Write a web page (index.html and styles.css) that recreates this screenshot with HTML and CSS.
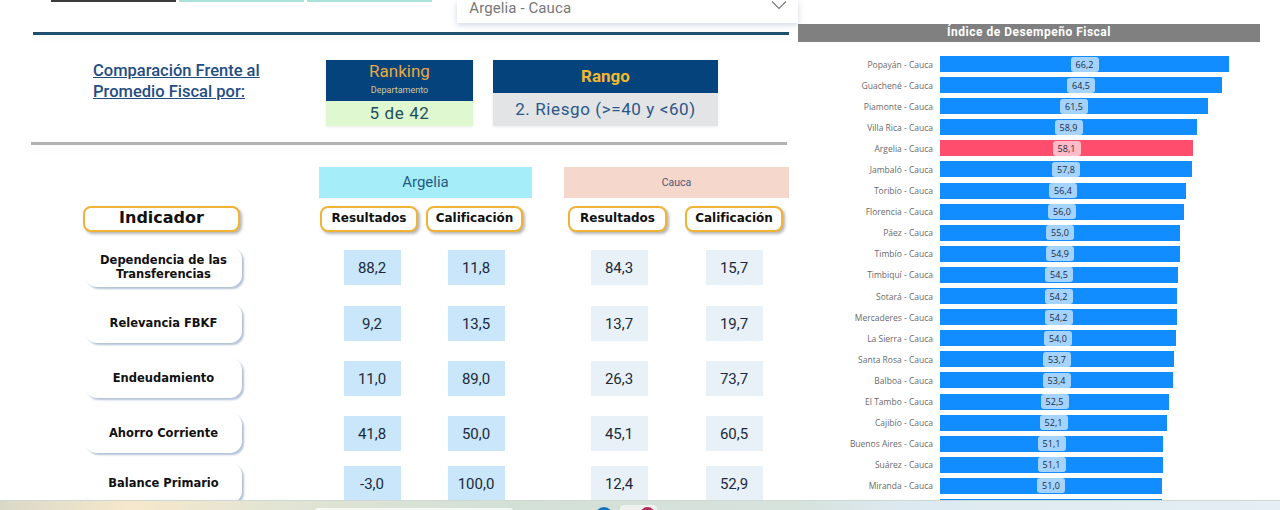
FILE: index.html
```html
<!DOCTYPE html>
<html lang="es">
<head>
    <meta charset="UTF-8">
    <meta name="viewport" content="width=device-width, initial-scale=1.0">
    <title>Índice de Desempeño Fiscal</title>
    <link rel="stylesheet" href="styles.css">
</head>
<body>

<div class="app">
    <!-- Left: comparison table -->
    <div class="left">
        <div class="top-bar">
            <div class="tabs">
                <div class="tab tab-dark"></div>
                <div class="tab"></div>
                <div class="tab"></div>
            </div>
            <div class="dropdown">
                <span>Argelia - Cauca</span>
                <svg class="chevron" width="16" height="10" viewBox="0 0 16 10"><path d="M1 1.5 L8 8.5 L15 1.5" fill="none" stroke="#777" stroke-width="1.1"/></svg>
            </div>
        </div>
        <div class="rule rule-blue"></div>

        <div class="summary">
            <h2 class="summary-title">Comparación Frente al Promedio Fiscal por:</h2>
            <div class="kpi kpi-ranking">
                <div class="kpi-head ranking-head">
                    <div class="ranking-name">Ranking</div>
                    <div class="ranking-sub">Departamento</div>
                </div>
                <div class="kpi-value ranking-value">5 de 42</div>
            </div>
            <div class="kpi kpi-rango">
                <div class="kpi-head rango-head">Rango</div>
                <div class="kpi-value rango-value">2. Riesgo (&gt;=40 y &lt;60)</div>
            </div>
        </div>
        <div class="rule rule-grey"></div>

        <div class="bands">
            <div class="band band-a">Argelia</div>
            <div class="band band-b">Cauca</div>
        </div>
        <div class="pills">
            <div class="pill pill-main">Indicador</div>
            <div class="pill pill-a1">Resultados</div>
            <div class="pill pill-a2">Calificación</div>
            <div class="pill pill-b1">Resultados</div>
            <div class="pill pill-b2">Calificación</div>
        </div>

        <div class="rows">
            <div class="row">
                <div class="row-label">Dependencia de las Transferencias</div>
                <div class="vals vals-a"><div class="cell"><span class="val val-a">88,2</span></div><div class="cell"><span class="val val-a">11,8</span></div></div>
                <div class="vals vals-b"><div class="cell"><span class="val val-b">84,3</span></div><div class="cell"><span class="val val-b">15,7</span></div></div>
            </div>
            <div class="row">
                <div class="row-label">Relevancia FBKF</div>
                <div class="vals vals-a"><div class="cell"><span class="val val-a">9,2</span></div><div class="cell"><span class="val val-a">13,5</span></div></div>
                <div class="vals vals-b"><div class="cell"><span class="val val-b">13,7</span></div><div class="cell"><span class="val val-b">19,7</span></div></div>
            </div>
            <div class="row">
                <div class="row-label">Endeudamiento</div>
                <div class="vals vals-a"><div class="cell"><span class="val val-a">11,0</span></div><div class="cell"><span class="val val-a">89,0</span></div></div>
                <div class="vals vals-b"><div class="cell"><span class="val val-b">26,3</span></div><div class="cell"><span class="val val-b">73,7</span></div></div>
            </div>
            <div class="row">
                <div class="row-label">Ahorro Corriente</div>
                <div class="vals vals-a"><div class="cell"><span class="val val-a">41,8</span></div><div class="cell"><span class="val val-a">50,0</span></div></div>
                <div class="vals vals-b"><div class="cell"><span class="val val-b">45,1</span></div><div class="cell"><span class="val val-b">60,5</span></div></div>
            </div>
            <div class="row">
                <div class="row-label">Balance Primario</div>
                <div class="vals vals-a"><div class="cell"><span class="val val-a">-3,0</span></div><div class="cell"><span class="val val-a">100,0</span></div></div>
                <div class="vals vals-b"><div class="cell"><span class="val val-b">12,4</span></div><div class="cell"><span class="val val-b">52,9</span></div></div>
            </div>
        </div>
    </div>

    <!-- Right: bar chart -->
    <div class="right">
        <div class="chart-title">Índice de Desempeño Fiscal</div>
        <div class="chart">
            <div class="bar-row"><div class="bar-name">Popayán - Cauca</div><div class="bar" style="width:289px"><span class="bar-val">66,2</span></div></div>
            <div class="bar-row"><div class="bar-name">Guachené - Cauca</div><div class="bar" style="width:282px"><span class="bar-val">64,5</span></div></div>
            <div class="bar-row"><div class="bar-name">Piamonte - Cauca</div><div class="bar" style="width:268px"><span class="bar-val">61,5</span></div></div>
            <div class="bar-row"><div class="bar-name">Villa Rica - Cauca</div><div class="bar" style="width:257px"><span class="bar-val">58,9</span></div></div>
            <div class="bar-row"><div class="bar-name">Argelia - Cauca</div><div class="bar bar-red" style="width:253px"><span class="bar-val">58,1</span></div></div>
            <div class="bar-row"><div class="bar-name">Jambaló - Cauca</div><div class="bar" style="width:252px"><span class="bar-val">57,8</span></div></div>
            <div class="bar-row"><div class="bar-name">Toribío - Cauca</div><div class="bar" style="width:246px"><span class="bar-val">56,4</span></div></div>
            <div class="bar-row"><div class="bar-name">Florencia - Cauca</div><div class="bar" style="width:244px"><span class="bar-val">56,0</span></div></div>
            <div class="bar-row"><div class="bar-name">Páez - Cauca</div><div class="bar" style="width:240px"><span class="bar-val">55,0</span></div></div>
            <div class="bar-row"><div class="bar-name">Timbío - Cauca</div><div class="bar" style="width:240px"><span class="bar-val">54,9</span></div></div>
            <div class="bar-row"><div class="bar-name">Timbiquí - Cauca</div><div class="bar" style="width:238px"><span class="bar-val">54,5</span></div></div>
            <div class="bar-row"><div class="bar-name">Sotará - Cauca</div><div class="bar" style="width:237px"><span class="bar-val">54,2</span></div></div>
            <div class="bar-row"><div class="bar-name">Mercaderes - Cauca</div><div class="bar" style="width:237px"><span class="bar-val">54,2</span></div></div>
            <div class="bar-row"><div class="bar-name">La Sierra - Cauca</div><div class="bar" style="width:236px"><span class="bar-val">54,0</span></div></div>
            <div class="bar-row"><div class="bar-name">Santa Rosa - Cauca</div><div class="bar" style="width:234px"><span class="bar-val">53,7</span></div></div>
            <div class="bar-row"><div class="bar-name">Balboa - Cauca</div><div class="bar" style="width:233px"><span class="bar-val">53,4</span></div></div>
            <div class="bar-row"><div class="bar-name">El Tambo - Cauca</div><div class="bar" style="width:229px"><span class="bar-val">52,5</span></div></div>
            <div class="bar-row"><div class="bar-name">Cajibío - Cauca</div><div class="bar" style="width:227px"><span class="bar-val">52,1</span></div></div>
            <div class="bar-row"><div class="bar-name">Buenos Aires - Cauca</div><div class="bar" style="width:223px"><span class="bar-val">51,1</span></div></div>
            <div class="bar-row"><div class="bar-name">Suárez - Cauca</div><div class="bar" style="width:223px"><span class="bar-val">51,1</span></div></div>
            <div class="bar-row"><div class="bar-name">Miranda - Cauca</div><div class="bar" style="width:222px"><span class="bar-val">51,0</span></div></div>
            <div class="bar-row"><div class="bar-name"></div><div class="bar" style="width:222px"></div></div>
        </div>
    </div>
</div>

<div class="taskbar">
    <div class="search"></div>
    <div class="task-icon task-blue"></div>
    <div class="task-card"><div class="task-icon task-red"></div></div>
</div>

</body>
</html>
```

FILE: styles.css
```css
html, body {
    margin: 0;
    padding: 0;
}
body {
    width: 1280px;
    height: 510px;
    overflow: hidden;
    background-color: #fff;
    font-family: Roboto, "Liberation Sans", sans-serif;
}
.app {
    display: flex;
    height: 500px;
    overflow: hidden;
}

/* left side */
.left {
    width: 798px;
    flex: none;
}
.top-bar {
    display: flex;
    height: 24px;
    padding-left: 51px;
}
.tabs {
    display: flex;
    gap: 3px;
    width: 408px;
}
.tab {
    width: 125px;
    height: 2px;
    background-color: #a9e2da;
}
.tab-dark {
    background-color: #3b3b3b;
}
.dropdown {
    display: flex;
    justify-content: space-between;
    width: 318px;
    height: 23px;
    padding: 0 12px;
    background: #fff;
    color: #777;
    font-size: 15px;
    line-height: 16px;
    letter-spacing: 0.1px;
    box-shadow: 0 2px 6px rgba(120,140,180,0.35);
}
.chevron {
    margin-right: -1px;
}
.rule {
    height: 3px;
}
.rule-blue {
    width: 756px;
    margin: 8px 0 0 33px;
    background-color: #1f5070;
    box-shadow: 0 4px 8px rgba(0,0,0,0.04);
}
.rule-grey {
    width: 756px;
    margin: 16px 0 0 31px;
    background-color: #b2b2b2;
    box-shadow: 0 4px 8px rgba(0,0,0,0.05);
}

.summary {
    display: flex;
    height: 66px;
    margin-top: 25px;
    padding-left: 93px;
}
.summary-title {
    width: 200px;
    margin: 0 33px 0 0;
    color: #1f4e84;
    font-size: 16.5px;
    font-weight: 500;
    line-height: 21px;
    text-decoration: underline;
}
.kpi {
    display: flex;
    flex-direction: column;
    box-shadow: 0 1px 3px rgba(0,0,0,0.08);
}
.kpi-ranking {
    width: 147px;
    margin-right: 20px;
}
.kpi-rango {
    width: 225px;
}
.kpi-head {
    background-color: #04437c;
    text-align: center;
}
.ranking-head {
    height: 41px;
}
.ranking-name {
    padding-top: 1px;
    color: #e9a844;
    font-size: 17px;
    line-height: 20px;
}
.ranking-sub {
    margin-top: 3px;
    color: #d8c89a;
    font-size: 9px;
    line-height: 12px;
}
.rango-head {
    height: 33px;
    color: #f2b92e;
    font-size: 17px;
    font-weight: 700;
    line-height: 32px;
}
.kpi-value {
    flex: 1;
    text-align: center;
    font-size: 17px;
    letter-spacing: 0.6px;
}
.ranking-value {
    background-color: #e0f8cf;
    color: #1f4f5c;
    line-height: 25px;
}
.rango-value {
    background-color: #e3e4e6;
    color: #2a5688;
    line-height: 33px;
}

/* table */
.bands {
    display: flex;
    gap: 32px;
    margin-top: 22px;
    padding-left: 319px;
}
.band {
    height: 31px;
    text-align: center;
    line-height: 31px;
}
.band-a {
    width: 213px;
    background-color: #a6edfa;
    color: #1f5c80;
    font-size: 15px;
}
.band-b {
    width: 225px;
    background-color: #f6d7cb;
    color: #4a5878;
    font-size: 10.5px;
}
.pills {
    display: flex;
    margin-top: 8px;
    padding-left: 83px;
}
.pill {
    box-sizing: border-box;
    height: 26px;
    border: 2.5px solid #efb336;
    border-radius: 8px;
    background: #fff;
    box-shadow: 2px 2px 3px rgba(90,90,90,0.45);
    color: #111;
    font-family: "DejaVu Sans", sans-serif;
    font-size: 12px;
    font-weight: 700;
    line-height: 20px;
    text-align: center;
}
.pill-main {
    width: 157px;
    font-size: 16px;
}
.pill-a1 {
    width: 98px;
    margin: 0 8px 0 80px;
}
.pill-a2 {
    width: 97px;
    margin-right: 45px;
}
.pill-b1 {
    width: 99px;
    margin-right: 18px;
}
.pill-b2 {
    width: 98px;
}

.rows {
    margin-top: 15px;
    padding-left: 85px;
}
.row {
    display: flex;
    align-items: center;
    height: 40px;
    margin-bottom: 15px;
}
.row:first-child {
    margin-bottom: 16px;
}
.row:nth-child(4) {
    margin-bottom: 10px;
}
.row-label {
    box-sizing: border-box;
    display: flex;
    align-items: center;
    justify-content: center;
    width: 157px;
    height: 40px;
    padding: 0 10px;
    border-radius: 12px;
    background: #fff;
    box-shadow: 2px 2px 2px #b4c2d8;
    color: #111;
    font-family: "DejaVu Sans", sans-serif;
    font-size: 11.5px;
    font-weight: 700;
    line-height: 14px;
    text-align: center;
}
.vals {
    display: flex;
}
.vals-a {
    margin-left: 78px;
}
.vals-a .cell {
    width: 104px;
}
.vals-b {
    margin-left: 41px;
    gap: 15px;
}
.vals-b .cell {
    width: 100px;
}
.cell {
    display: flex;
    justify-content: center;
}
.val {
    width: 57px;
    height: 35px;
    color: #1b2a3a;
    font-size: 15px;
    line-height: 36px;
    text-align: center;
}
.val-a {
    background-color: #c9e6fb;
}
.val-b {
    background-color: #e9f1f8;
}

/* right side */
.right {
    flex: none;
    width: 462px;
    padding-top: 24px;
}
.chart-title {
    height: 18px;
    background-color: #808080;
    color: #fff;
    font-size: 12px;
    font-weight: 700;
    letter-spacing: 0.5px;
    line-height: 16px;
    text-align: center;
}
.chart {
    margin-top: 14px;
}
.bar-row {
    display: flex;
    align-items: center;
    height: 16px;
    margin-bottom: 5.1px;
}
.bar-name {
    width: 135px;
    margin-right: 7px;
    color: #6a6a6a;
    font-family: "Open Sans", sans-serif;
    font-size: 8.5px;
    text-align: right;
}
.bar {
    display: flex;
    align-items: center;
    justify-content: center;
    height: 16px;
    background-color: #118dff;
}
.bar-red {
    background-color: #ff4d6d;
}
.bar-val {
    width: 28px;
    height: 15px;
    border-radius: 3px;
    background-color: rgba(255,255,255,0.62);
    color: #1b2a3a;
    font-family: "Open Sans", sans-serif;
    font-size: 9px;
    line-height: 15px;
    text-align: center;
}

/* taskbar strip at the bottom */
.taskbar {
    display: flex;
    height: 9px;
    padding-left: 315px;
    overflow: hidden;
    border-top: 1px solid #cfd8d2;
    background: linear-gradient(90deg, #d9d8c8 0, #f6e8cb 130px, #e2e4d4 280px, #d3e0d6 500px, #d6e2dc 800px, #dde9f0 900px, #e4eef4 1280px);
}
.search {
    width: 198px;
    height: 6px;
    margin: 7px 82px 0 0;
    border-radius: 3px 3px 0 0;
    background-color: #f6f8f8;
}
.task-icon {
    width: 18px;
    height: 18px;
    border-radius: 50%;
}
.task-blue {
    margin: 6px 7px 0 0;
    background-color: #1272c0;
}
.task-card {
    width: 37px;
    height: 12px;
    margin-top: 4px;
    padding-left: 20px;
    box-sizing: border-box;
    border-radius: 4px 4px 0 0;
    background-color: #eef1ee;
}
.task-red {
    width: 15px;
    height: 15px;
    margin-top: 2px;
    background-color: #b02a5c;
}
```
